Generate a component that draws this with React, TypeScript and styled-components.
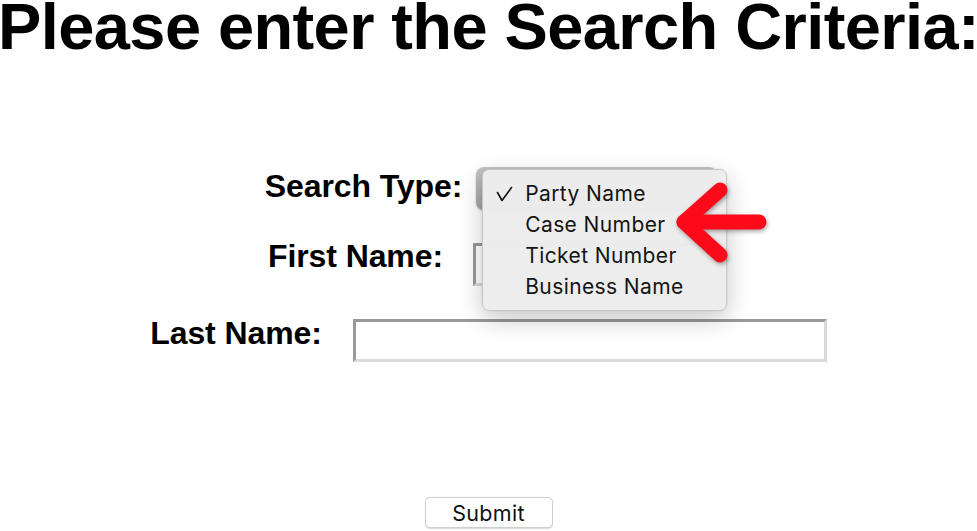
import React from 'react'
import styled, { createGlobalStyle } from 'styled-components'

const GlobalStyle = createGlobalStyle`
html, body {
  margin: 0;
  padding: 0;
  background: #ffffff;
}
body {
  font-family: "Liberation Sans", Arial, sans-serif;
  overflow: hidden;
}
`

const options = ['Party Name', 'Case Number', 'Ticket Number', 'Business Name']

const App = () => {
  return (
    <Page>
      <GlobalStyle />
      <Title>Please enter the Search Criteria:</Title>

      <Form>
        <Row gap={14} shift={5}>
          <Label top={3}>Search Type:</Label>
          <SelectWrap>
            <PopButton />
            <Menu>
              {options.map((o, i) => (
                <Item key={o}>
                  <Check>
                    {i === 0 && (
                      <svg width="17" height="16" viewBox="0 0 17 16">
                        <polyline
                          points="1.5,6.5 6,14.5 15.5,1.5"
                          fill="none"
                          stroke="#111"
                          strokeWidth="1.6"
                          strokeLinecap="round"
                          strokeLinejoin="round"
                        />
                      </svg>
                    )}
                  </Check>
                  {o}
                </Item>
              ))}
            </Menu>
            <Arrow width="100" height="90" viewBox="0 0 100 90">
              <g
                fill="none"
                stroke="#fd0a1a"
                strokeWidth="15"
                strokeLinecap="round"
                strokeLinejoin="round"
              >
                <polyline points="48,12 12,44 48,77" />
                <line x1="12" y1="44" x2="87" y2="44" />
              </g>
            </Arrow>
          </SelectWrap>
        </Row>

        <Row gap={30} shift={0}>
          <Label top={-3}>First Name:</Label>
          <TextBox w={236} />
        </Row>

        <Row gap={31} shift={0}>
          <Label top={-2}>Last Name:</Label>
          <TextBox w={474} />
        </Row>
      </Form>

      <Footer>
        <Submit>Submit</Submit>
      </Footer>
    </Page>
  )
}

export default App

const Page = styled.div`
width: 977px;
height: 531px;
display: flex;
flex-direction: column;
align-items: center;
`

const Title = styled.h1`
margin: 0;
font-size: 65px;
line-height: 53px;
font-weight: bold;
letter-spacing: -0.6px;
color: #000;
white-space: nowrap;
text-align: center;
`

const Form = styled.div`
margin-top: 114px;
width: 100%;
display: flex;
flex-direction: column;
gap: 33px;
`

const Row = styled.div<{ gap: number; shift: number }>`
display: flex;
justify-content: center;
align-items: flex-start;
gap: ${p => p.gap}px;
padding-left: ${p => p.shift}px;
`

const Label = styled.div<{ top: number }>`
margin-top: ${p => p.top}px;
font-size: 32px;
line-height: 32px;
font-weight: bold;
letter-spacing: -0.1px;
color: #000;
white-space: nowrap;
`

const SelectWrap = styled.div`
position: relative;
width: 241px;
height: 43px;
`

const PopButton = styled.div`
width: 100%;
height: 100%;
box-sizing: border-box;
border-radius: 8px;
background: linear-gradient(#c4c4c4, #a3a3a3);
box-shadow: 0 1px 2px rgba(0, 0, 0, 0.25);
`

const Menu = styled.div`
position: absolute;
left: 6px;
top: 2px;
width: 245px;
height: 142px;
box-sizing: border-box;
padding: 8px 0 10px 0;
background: rgba(237, 237, 237, 0.98);
border: 1px solid #c6c6c6;
border-radius: 7px;
box-shadow: 0 8px 24px rgba(0, 0, 0, 0.22), 0 0 2px rgba(0, 0, 0, 0.1);
z-index: 2;
`

const Item = styled.div`
height: 31px;
display: flex;
align-items: center;
font-family: Inter, "Noto Sans", sans-serif;
font-size: 21px;
letter-spacing: 0.4px;
color: #141414;
white-space: nowrap;
`

const Check = styled.span`
width: 42px;
height: 16px;
padding-left: 13px;
box-sizing: border-box;
display: flex;
align-items: center;
`

const Arrow = styled.svg`
position: absolute;
left: 196px;
top: 11px;
z-index: 3;
filter: drop-shadow(1px 2px 2px rgba(0, 0, 0, 0.35));
`

const TextBox = styled.input<{ w: number }>`
width: ${p => p.w}px;
height: 43px;
box-sizing: border-box;
margin: 0;
padding: 0;
border-style: solid;
border-width: 3px;
border-color: #999 #d9d9d9 #d9d9d9 #999;
background: #fff;
outline: none;
`

const Footer = styled.div`
margin-top: 135px;
display: flex;
justify-content: center;
`

const Submit = styled.button`
width: 128px;
height: 31px;
margin: 0;
padding: 0;
background: #fff;
border: 1px solid #cfcfcf;
border-radius: 5px;
box-shadow: 0 0.5px 1px rgba(0, 0, 0, 0.15);
font-family: Inter, "Noto Sans", sans-serif;
font-size: 21.5px;
letter-spacing: 0.3px;
color: #111;
cursor: pointer;
`
